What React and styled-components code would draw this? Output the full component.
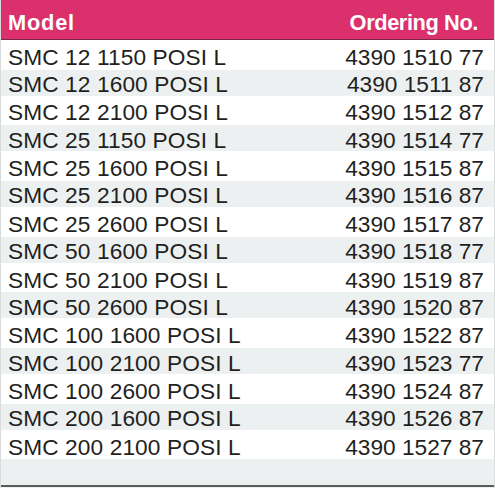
import styled, { createGlobalStyle } from "styled-components";

const GlobalStyle = createGlobalStyle`
  html, body {
    margin: 0;
    padding: 0;
    background: #ffffff;
  }
`;

const Table = styled.div`
  width: 495px;
  height: 488px;
  box-sizing: border-box;
  display: flex;
  flex-direction: column;
  font-family: "Liberation Sans", Arial, sans-serif;
  color: #231f20;
  border-left: 1px solid #d9dcdc;
  border-right: 1px solid #d9dcdc;
  background: #edf0f0;
`;

const Header = styled.div`
  height: 40px;
  flex: none;
  display: flex;
  align-items: center;
  justify-content: space-between;
  padding: 7px 16px 0 7px;
  box-sizing: border-box;
  background: #db306c;
  border-bottom: 1px solid #7a2843;
  color: #ffffff;
  font-weight: bold;
  font-size: 21.8px;
`;

const HeadCell = styled.span`
  letter-spacing: ${(p) => p.$spacing}px;
`;

const Row = styled.div`
  height: ${(p) => (p.$shaded ? 26.2 : 29.5)}px;
  flex: none;
  display: flex;
  align-items: center;
  justify-content: space-between;
  padding: ${(p) => (p.$shaded ? 4 : 5)}px 10px 0 7px;
  box-sizing: border-box;
  background: ${(p) => (p.$shaded ? "#edf0f0" : "#ffffff")};
  font-size: 22.7px;
`;

const ModelCell = styled.span`
  letter-spacing: 0.1px;
`;

const NumberCell = styled.span`
  letter-spacing: 0;
`;

const Filler = styled.div`
  flex: 1;
  background: #edf0f0;
  border-bottom: 2px solid #5a5c5c;
  margin-bottom: 1px;
`;

const rows = [
  ["SMC 12 1150 POSI L", "4390 1510 77"],
  ["SMC 12 1600 POSI L", "4390 1511 87"],
  ["SMC 12 2100 POSI L", "4390 1512 87"],
  ["SMC 25 1150 POSI L", "4390 1514 77"],
  ["SMC 25 1600 POSI L", "4390 1515 87"],
  ["SMC 25 2100 POSI L", "4390 1516 87"],
  ["SMC 25 2600 POSI L", "4390 1517 87"],
  ["SMC 50 1600 POSI L", "4390 1518 77"],
  ["SMC 50 2100 POSI L", "4390 1519 87"],
  ["SMC 50 2600 POSI L", "4390 1520 87"],
  ["SMC 100 1600 POSI L", "4390 1522 87"],
  ["SMC 100 2100 POSI L", "4390 1523 77"],
  ["SMC 100 2600 POSI L", "4390 1524 87"],
  ["SMC 200 1600 POSI L", "4390 1526 87"],
  ["SMC 200 2100 POSI L", "4390 1527 87"],
];

export default function App() {
  return (
    <>
      <GlobalStyle />
      <Table>
        <Header>
          <HeadCell $spacing={0.8}>Model</HeadCell>
          <HeadCell $spacing={-0.4}>Ordering No.</HeadCell>
        </Header>
        {rows.map(([model, no], i) => (
          <Row key={model} $shaded={i % 2 === 1}>
            <ModelCell>{model}</ModelCell>
            <NumberCell>{no}</NumberCell>
          </Row>
        ))}
        <Filler />
      </Table>
    </>
  );
}
